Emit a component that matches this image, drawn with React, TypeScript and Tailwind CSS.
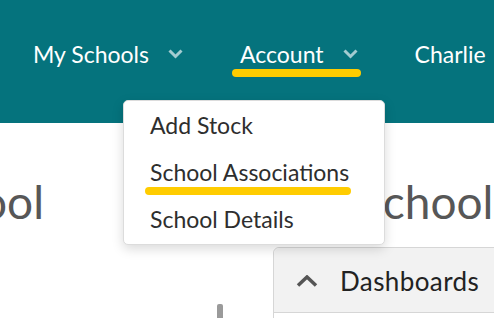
import React from "react";

function ChevronDown() {
  return (
    <svg width="15" height="10" viewBox="0 0 15 10" className="shrink-0">
      <polyline points="1.5,1.5 7.5,7.5 13.5,1.5" fill="none" stroke="#a3ccd1" strokeWidth="3" />
    </svg>
  );
}

function ChevronUp() {
  return (
    <svg width="22" height="12" viewBox="0 0 22 12" className="shrink-0">
      <polyline points="2,10.5 11,2 20,10.5" fill="none" stroke="#555555" strokeWidth="3.5" />
    </svg>
  );
}

function NavItem({ label, chevron = true, active = false }: { label: string; chevron?: boolean; active?: boolean }) {
  return (
    <div className="flex flex-col">
      <div className="flex items-center pl-[8px] pr-[3px] h-[24px]">
        <span className="text-[23px] leading-[24px] text-white whitespace-nowrap">{label}</span>
        {chevron && (
          <span className="ml-[19px] flex items-center">
            <ChevronDown />
          </span>
        )}
      </div>
      <div className={"mt-[3px] h-[8px] rounded-full " + (active ? "bg-[#ffcc00]" : "bg-transparent")} />
    </div>
  );
}

export default function App() {
  return (
    <div className="relative w-[494px] h-[318px] overflow-hidden bg-white font-['Lato','Noto_Sans',sans-serif]">
      <header className="h-[123px] bg-[#05737d] pt-[42px]">
        <nav className="flex gap-[46px] pl-[25px]">
          <NavItem label="My Schools" />
          <NavItem label="Account" active />
          <NavItem label="Charlie" chevron={false} />
        </nav>
      </header>

      <main className="flex">
        <div className="w-[273px] shrink-0 flex flex-col">
          <div className="w-[44px] flex justify-end mt-[55px]">
            <h1 className="text-[46px] leading-[48px] text-[#575757] whitespace-nowrap">School</h1>
          </div>
          <div className="ml-[217px] mt-[78px] w-[6px] h-[20px] rounded-t-[2px] bg-[#9a9a9a]" />
        </div>
        <div className="flex flex-col shrink-0">
          <h1 className="mt-[55px] pl-[85px] text-[46px] leading-[48px] text-[#575757] whitespace-nowrap">School</h1>
          <section className="mt-[21px] w-[260px] border border-[#d6d6d6] rounded-tl-[6px] bg-white">
            <div className="h-[65px] bg-[#f2f2f2] border-b border-[#d6d6d6] flex items-center rounded-tl-[6px]">
              <span className="ml-[22px] flex items-center mt-[2px]">
                <ChevronUp />
              </span>
              <span className="ml-[22px] text-[26px] leading-[26px] tracking-[0.4px] text-[#222222] mt-[1px]">Dashboards</span>
            </div>
            <div className="h-[20px]" />
          </section>
        </div>
      </main>

      <div className="absolute left-[123px] top-[100px] w-[262px] h-[145px] bg-white rounded-[5px] border border-[#dcdcdc] shadow-[0_4px_12px_rgba(0,0,0,0.15)] pt-[12px] pl-[26px]">
        <ul className="flex flex-col gap-[23px]">
          <li className="text-[23px] leading-[24px] text-[#2e2e2e] whitespace-nowrap">Add Stock</li>
          <li className="text-[23px] leading-[24px] text-[#2e2e2e] whitespace-nowrap">
            <span className="relative inline-block">
              School Associations
              <span className="absolute -left-[5px] -right-[2px] top-[27px] h-[8px] rounded-full bg-[#ffcc00]" />
            </span>
          </li>
          <li className="text-[23px] leading-[24px] text-[#2e2e2e] whitespace-nowrap">School Details</li>
        </ul>
      </div>
    </div>
  );
}
